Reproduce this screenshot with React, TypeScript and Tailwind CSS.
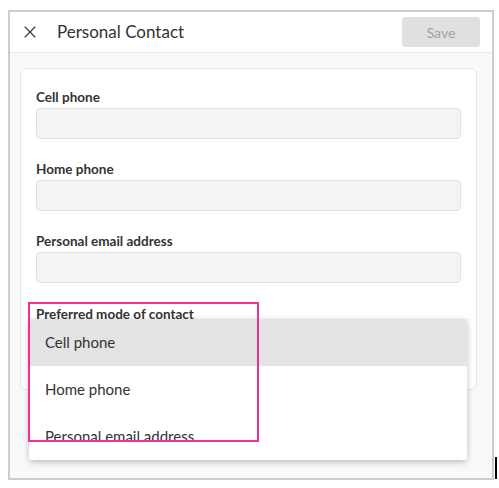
import { X } from "lucide-react";

const fields = ["Cell phone", "Home phone", "Personal email address"];
const options = ["Cell phone", "Home phone", "Personal email address"];

const App = () => {
  return (
    <div
      className="relative w-[499px] h-[488px] bg-white pt-[10px] pl-[8px] text-[#333]"
      style={{ fontFamily: "Lato, 'Open Sans', sans-serif" }}
    >
      <div className="w-[486px] h-[470px] border-2 border-[#cdcdcd] bg-[#f9f9f9] flex flex-col">
        {/* Header */}
        <div className="h-[41px] bg-white border-b border-[#e9e9e9] flex items-center pl-[10px] pr-[12px]">
          <X className="w-[20px] h-[20px] text-[#333]" strokeWidth={1.3} />
          <h1 className="ml-[17px] text-[17px] text-[#333]">Personal Contact</h1>
          <button className="ml-auto w-[78px] h-[30px] rounded-[3px] bg-[#e0e0e0] text-[14px] text-[#a0a0a0]">
            Save
          </button>
        </div>

        {/* Card */}
        <div className="mt-[15px] ml-[10px] mr-[15px] h-[322px] bg-white border border-[#e6e6e6] rounded-[6px] px-[15px] pt-[20px]">
          {fields.map((f, i) => (
            <div key={f} className={i > 0 ? "mt-[22px]" : ""}>
              <div className="text-[13.5px] leading-[16px] font-bold text-[#333]">{f}</div>
              <div className="mt-[3px] h-[31px] bg-[#f4f4f4] border border-[#e2e2e2] rounded-[4px]" />
            </div>
          ))}
          <div className="mt-[23px] text-[13.5px] leading-[16px] font-bold text-[#333]">
            Preferred mode of contact
          </div>
        </div>
      </div>

      {/* Dropdown menu */}
      <div className="absolute left-[29px] top-[319px] w-[438px] h-[141px] bg-white rounded-b-[4px] shadow-[0_2px_6px_rgba(0,0,0,0.25)] overflow-hidden">
        {options.map((o, i) => (
          <div
            key={o}
            className={`h-[47px] flex items-center pl-[16px] text-[15px] text-[#333] ${i === 0 ? "bg-[#e4e4e4]" : "bg-white"}`}
          >
            {o}
          </div>
        ))}
      </div>

      {/* Highlight box */}
      <div className="absolute left-[28px] top-[302px] w-[231px] h-[140px] border-2 border-[#fb2d8c]" />

      {/* cursor mark */}
      <div className="absolute left-[495px] top-[457px] w-[2px] h-[22px] bg-black" />
    </div>
  );
};

export default App;
